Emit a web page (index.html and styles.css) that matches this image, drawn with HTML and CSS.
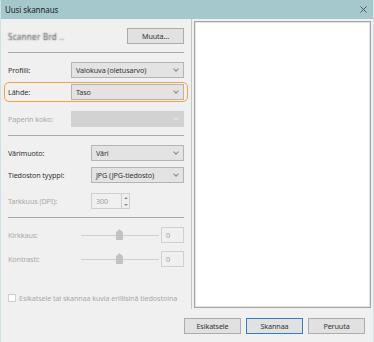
FILE: index.html
```html
<!DOCTYPE html>
<html lang="fi">
<head>
    <meta charset="UTF-8">
    <meta name="viewport" content="width=device-width, initial-scale=1.0">
    <title>Uusi skannaus</title>
    <link rel="stylesheet" href="styles.css">
</head>
<body>
    <div class="window">
        <div class="titlebar">
            <span>Uusi skannaus</span>
            <svg class="close" width="7" height="7" viewBox="0 0 7 7"><path d="M0.5 0.5L6.5 6.5M6.5 0.5L0.5 6.5" stroke="#555" stroke-width="1"/></svg>
        </div>
        <div class="main">
            <div class="left">
                <div class="row scanner-row">
                    <span class="scanner-name">Scanner Brd ..</span>
                    <button class="btn btn-change">Muuta...</button>
                </div>
                <div class="sep"></div>

                <div class="row">
                    <label class="lbl lbl-a">Profiili:</label>
                    <div class="select">Valokuva (oletusarvo)<span class="chev"></span></div>
                </div>
                <div class="row highlight">
                    <label class="lbl lbl-a">Lähde:</label>
                    <div class="select">Taso<span class="chev"></span></div>
                </div>
                <div class="row row-paper">
                    <label class="lbl lbl-a disabled">Paperin koko:</label>
                    <div class="select select-off"><span class="chev"></span></div>
                </div>
                <div class="sep"></div>

                <div class="row">
                    <label class="lbl lbl-b">Värimuoto:</label>
                    <div class="select">Väri<span class="chev"></span></div>
                </div>
                <div class="row">
                    <label class="lbl lbl-b">Tiedoston tyyppi:</label>
                    <div class="select">JPG (JPG-tiedosto)<span class="chev"></span></div>
                </div>
                <div class="row row-dpi">
                    <label class="lbl lbl-b disabled">Tarkkuus (DPI):</label>
                    <div class="spin">
                        <span class="spin-val">300</span>
                        <span class="spin-btns"><span class="up"></span><span class="down"></span></span>
                    </div>
                </div>
                <div class="sep"></div>

                <div class="row">
                    <label class="lbl lbl-c disabled">Kirkkaus:</label>
                    <div class="slider"><span class="track"></span><span class="thumb"></span></div>
                    <div class="value">0</div>
                </div>
                <div class="row row-contrast">
                    <label class="lbl lbl-c disabled">Kontrasti:</label>
                    <div class="slider"><span class="track"></span><span class="thumb"></span></div>
                    <div class="value">0</div>
                </div>

                <div class="check-row">
                    <span class="box"></span>
                    <span class="disabled">Esikatsele tai skannaa kuvia erillisinä tiedostoina</span>
                </div>
            </div>
            <div class="right">
                <div class="preview"></div>
            </div>
        </div>
        <div class="footer">
            <button class="btn">Esikatsele</button>
            <button class="btn btn-default">Skannaa</button>
            <button class="btn">Peruuta</button>
        </div>
    </div>
</body>
</html>
```

FILE: styles.css
```css
*{
    margin: 0;
    padding: 0;
    box-sizing: border-box;
}
body{
    width: 374px;
    height: 342px;
    overflow: hidden;
    font-family: "Noto Sans", "Open Sans", sans-serif;
    font-size: 7.2px;
    letter-spacing: -0.1px;
    color: #333;
    background: #f0f0f0;
}
.window{
    display: flex;
    flex-direction: column;
    height: 342px;
    border-left: 1px solid #cfe0e6;
    border-right: 1px solid #cfe0e6;
}
.titlebar{
    display: flex;
    justify-content: space-between;
    align-items: center;
    height: 19px;
    padding: 0 5px 0 4px;
    background: #a4c8cc;
    font-size: 8px;
    color: #222;
}
.close{
    margin-right: 1px;
}
.main{
    display: flex;
    height: 290px;
}
.left{
    width: 191px;
    padding: 9px 7px 0 7px;
    border-right: 1px solid #c4c4c4;
}
.right{
    flex: 1;
    padding: 2px 2px 0 2px;
}
.preview{
    height: 287px;
    background: #fff;
    border: 1px solid #a6a6a6;
    box-shadow: inset 0 0 0 1px #e2e2e2;
}
.row{
    display: flex;
    align-items: center;
    height: 16px;
    margin-bottom: 6px;
    white-space: nowrap;
}
.scanner-row{
    justify-content: space-between;
    margin-bottom: 0;
}
/* name is blurred in the original */
.scanner-name{
    font-size: 8px;
    letter-spacing: 0.3px;
    color: transparent;
    text-shadow: 0 0 1.5px rgba(60, 60, 60, 0.9);
}
.sep{
    height: 1px;
    margin: 8px 0 9px 0;
    background: #a9a9a9;
}
.row-paper, .row-dpi, .row-contrast{
    margin-bottom: 0;
}
.row-paper{
    margin-top: 9px;
}
.row-dpi{
    margin-top: 10px;
}
.row-contrast{
    margin-top: 8px;
}
.highlight{
    margin: -2px -4px 4px -4px;
    padding: 1px 3px;
    height: 20px;
    border: 1px solid #f1a23c;
    border-radius: 5px;
}
.lbl{
    flex-shrink: 0;
}
.lbl-a{ width: 63px; }
.lbl-b{ width: 83px; }
.lbl-c{ width: 73px; }
.disabled{
    color: #a8a8a8;
}
.select{
    position: relative;
    flex: 1;
    height: 16px;
    padding-left: 4px;
    line-height: 14px;
    background: #e3e3e3;
    border: 1px solid #b4b4b4;
}
.select-off{
    background: #d2d2d2;
    border-color: #d2d2d2;
}
.chev{
    position: absolute;
    right: 5px;
    top: 4px;
    width: 4px;
    height: 4px;
    border-right: 1px solid #888;
    border-bottom: 1px solid #888;
    transform: rotate(45deg);
}
.select-off .chev{
    border-color: #e8e8e8;
}
.spin{
    display: flex;
    width: 39px;
    height: 16px;
    border: 1px solid #cfcfcf;
    background: #f0f0f0;
    color: #a0a0a0;
}
.spin-val{
    flex: 1;
    padding-left: 4px;
    line-height: 14px;
}
.spin-btns{
    display: flex;
    flex-direction: column;
    justify-content: space-around;
    align-items: center;
    width: 8px;
    border-left: 1px solid #cfcfcf;
}
.up, .down{
    width: 0;
    height: 0;
    border-left: 2px solid transparent;
    border-right: 2px solid transparent;
}
.up{ border-bottom: 2px solid #888; }
.down{ border-top: 2px solid #888; }
.slider{
    position: relative;
    width: 78px;
    height: 16px;
}
.track{
    position: absolute;
    left: 0;
    right: 0;
    top: 8px;
    height: 1px;
    background: #cfcfcf;
}
.thumb{
    position: absolute;
    left: 35px;
    top: 2px;
    width: 7px;
    height: 11px;
    background: #c3c3c3;
    clip-path: polygon(50% 0, 100% 30%, 100% 100%, 0 100%, 0 30%);
}
.value{
    width: 23px;
    height: 16px;
    margin-left: auto;
    padding-left: 4px;
    line-height: 14px;
    border: 1px solid #d0d0d0;
    color: #a0a0a0;
}
.check-row{
    display: flex;
    align-items: center;
    gap: 3px;
    margin-top: 26px;
    white-space: nowrap;
}
.box{
    flex-shrink: 0;
    width: 8px;
    height: 8px;
    background: #fff;
    border: 1px solid #d0d0d0;
}
.footer{
    display: flex;
    justify-content: flex-end;
    gap: 5px;
    padding: 9px 8px 0 0;
}
.btn{
    width: 57px;
    height: 16px;
    font-family: inherit;
    font-size: 7.2px;
    letter-spacing: -0.1px;
    color: #333;
    background: #e1e1e1;
    border: 1px solid #adadad;
}
.btn-change{
    width: 57px;
}
.btn-default{
    border-color: #2b7fd1;
}
```
